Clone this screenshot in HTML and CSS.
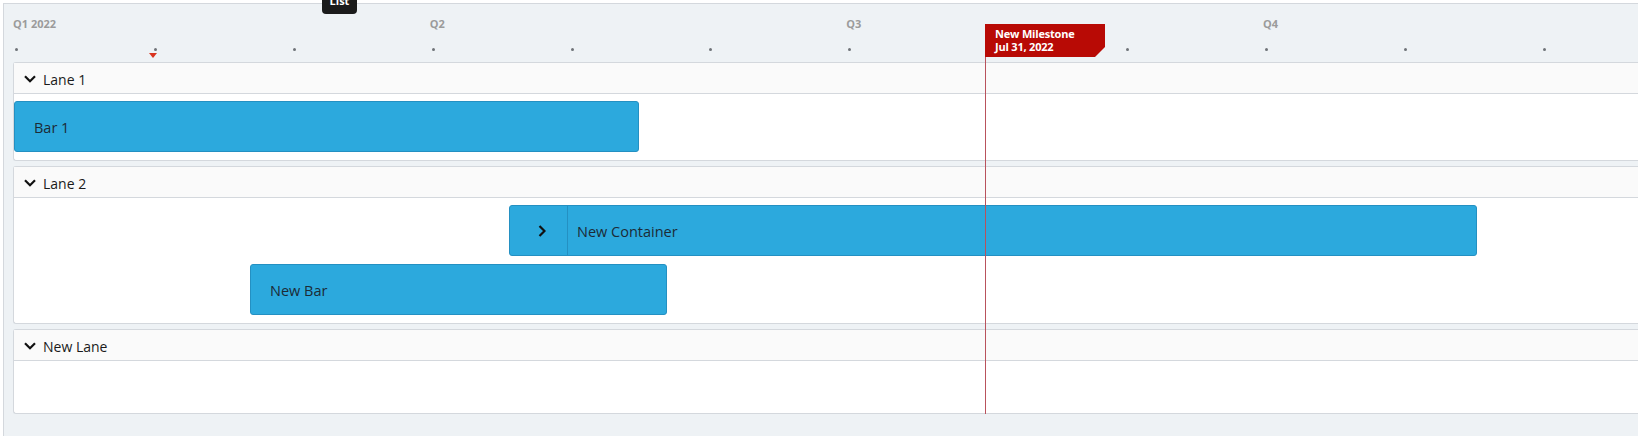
FILE: index.html
```html
<!DOCTYPE html>
<html lang="en">
<head>
<meta charset="utf-8">
<title>Roadmap</title>
<link rel="stylesheet" href="styles.css">
</head>
<body>
<div class="roadmap">
  <div class="timescale">
    <div class="quarters">
      <div class="quarter">Q1 2022</div>
      <div class="quarter">Q2</div>
      <div class="quarter">Q3</div>
      <div class="quarter">Q4</div>
    </div>
    <div class="months">
      <div class="month"><span class="dot"></span></div>
      <div class="month"><span class="dot"></span></div>
      <div class="month"><span class="dot"></span></div>
      <div class="month"><span class="dot"></span></div>
      <div class="month"><span class="dot"></span></div>
      <div class="month"><span class="dot"></span></div>
      <div class="month"><span class="dot"></span></div>
      <div class="month"><span class="dot"></span></div>
      <div class="month"><span class="dot"></span></div>
      <div class="month"><span class="dot"></span></div>
      <div class="month"><span class="dot"></span></div>
      <div class="month"><span class="dot"></span></div>
    </div>
  </div>

  <div class="lanes">
    <section class="lane">
      <header class="lane-header">
        <svg class="chev" width="12" height="8" viewBox="0 0 12 8"><path d="M1 1.2 L6 6.2 L11 1.2" fill="none" stroke="#111" stroke-width="2.2"/></svg>
        <span>Lane 1</span>
      </header>
      <div class="lane-body">
        <div class="bar" style="margin-left:0px;width:625px">Bar 1</div>
      </div>
    </section>

    <section class="lane">
      <header class="lane-header">
        <svg class="chev" width="12" height="8" viewBox="0 0 12 8"><path d="M1 1.2 L6 6.2 L11 1.2" fill="none" stroke="#111" stroke-width="2.2"/></svg>
        <span>Lane 2</span>
      </header>
      <div class="lane-body">
        <div class="bar bar-container" style="margin-left:495px;width:968px">
          <span class="expander"><svg width="8" height="12" viewBox="0 0 8 12"><path d="M1.5 1 L6.5 6 L1.5 11" fill="none" stroke="#111" stroke-width="2.2"/></svg></span>
          <span class="bar-label">New Container</span>
        </div>
        <div class="bar" style="margin-left:236px;width:417px">New Bar</div>
      </div>
    </section>

    <section class="lane">
      <header class="lane-header">
        <svg class="chev" width="12" height="8" viewBox="0 0 12 8"><path d="M1 1.2 L6 6.2 L11 1.2" fill="none" stroke="#111" stroke-width="2.2"/></svg>
        <span>New Lane</span>
      </header>
      <div class="lane-body lane-body-empty"></div>
    </section>
  </div>

  <div class="today-marker"></div>
  <div class="milestone-line"></div>
  <div class="milestone-flag">New Milestone<br>Jul 31, 2022</div>
  <div class="tooltip">List</div>
</div>
</body>
</html>
```

FILE: styles.css
```css
html, body {
  margin: 0;
  padding: 0;
  background: #ffffff;
  overflow: hidden;
  width: 1638px;
  height: 436px;
}

body {
  font-family: "Open Sans", Lato, "Liberation Sans", sans-serif;
  color: #1f2a33;
}

.roadmap {
  position: relative;
  margin: 3px 0 0 3px;
  width: 1700px;
  height: 460px;
  border: 1px solid #d4d8dd;
  border-right: none;
  background: #eef2f5;
  padding-left: 9px;
  box-sizing: border-box;
}

.timescale {
  height: 58px;
  box-sizing: border-box;
  padding-top: 13px;
}

.quarters {
  display: flex;
}

.quarter {
  width: 416.67px;
  flex: none;
  font-size: 11px;
  font-weight: 700;
  line-height: 14px;
  color: #9b9b9b;
}

.months {
  display: flex;
  margin-top: 17px;
}

.month {
  width: 138.89px;
  flex: none;
  height: 3px;
}

.dot {
  display: block;
  width: 3px;
  height: 3px;
  margin-left: 2px;
  border-radius: 50%;
  background: #6f7378;
}

.lanes {
  display: flex;
  flex-direction: column;
  gap: 5px;
}

.lane {
  background: #ffffff;
  border: 1px solid #d4d8dd;
  border-right: none;
  border-radius: 3px 0 0 3px;
}

.lane-header {
  height: 30px;
  box-sizing: border-box;
  padding-top: 2px;
  display: flex;
  align-items: center;
  gap: 7px;
  padding-left: 10px;
  background: #fafafa;
  border-bottom: 1px solid #d4d8dd;
  font-size: 14px;
  color: #1a1a1a;
  height: 31px;
}

.chev {
  display: block;
  margin-top: -1px;
}

.lane-body {
  display: flex;
  flex-direction: column;
  gap: 8px;
  padding: 7px 0 8px;
}

.lane-body-empty {
  height: 52px;
  padding: 0;
  box-sizing: border-box;
}

.bar {
  height: 51px;
  box-sizing: border-box;
  display: flex;
  align-items: center;
  padding-left: 19px;
  padding-top: 2px;
  background: #2ca9dd;
  border: 1px solid #2490c2;
  border-radius: 3px;
  font-size: 14.5px;
  color: #1c2b36;
}

.bar-container {
  padding-left: 0;
  padding-top: 0;
}

.expander {
  width: 58px;
  height: 100%;
  display: flex;
  align-items: center;
  justify-content: center;
  border-right: 1px solid #2490c2;
  padding-left: 6px;
  box-sizing: border-box;
}

.bar-label {
  padding-left: 9px;
  padding-top: 2px;
}

.today-marker {
  position: absolute;
  left: 145px;
  top: 49px;
  width: 0;
  height: 0;
  border-left: 4px solid transparent;
  border-right: 4px solid transparent;
  border-top: 5px solid #d9331f;
}

.milestone-line {
  position: absolute;
  left: 981px;
  top: 20px;
  width: 1px;
  height: 390px;
  background: #b9525c;
}

.milestone-flag {
  position: absolute;
  left: 981px;
  top: 20px;
  width: 120px;
  height: 33px;
  box-sizing: border-box;
  padding: 3px 0 0 10px;
  background: #b80a05;
  clip-path: polygon(0 0, 100% 0, 100% calc(100% - 10px), calc(100% - 10px) 100%, 0 100%);
  color: #ffffff;
  font-size: 11px;
  font-weight: 700;
  line-height: 13px;
  letter-spacing: -0.2px;
}

.tooltip {
  position: absolute;
  left: 318px;
  top: -12px;
  width: 35px;
  height: 22px;
  box-sizing: border-box;
  padding-top: 2px;
  background: #1b1b1b;
  border-radius: 4px;
  color: #ffffff;
  font-size: 11px;
  font-weight: 700;
  line-height: 14px;
  text-align: center;
}
```
